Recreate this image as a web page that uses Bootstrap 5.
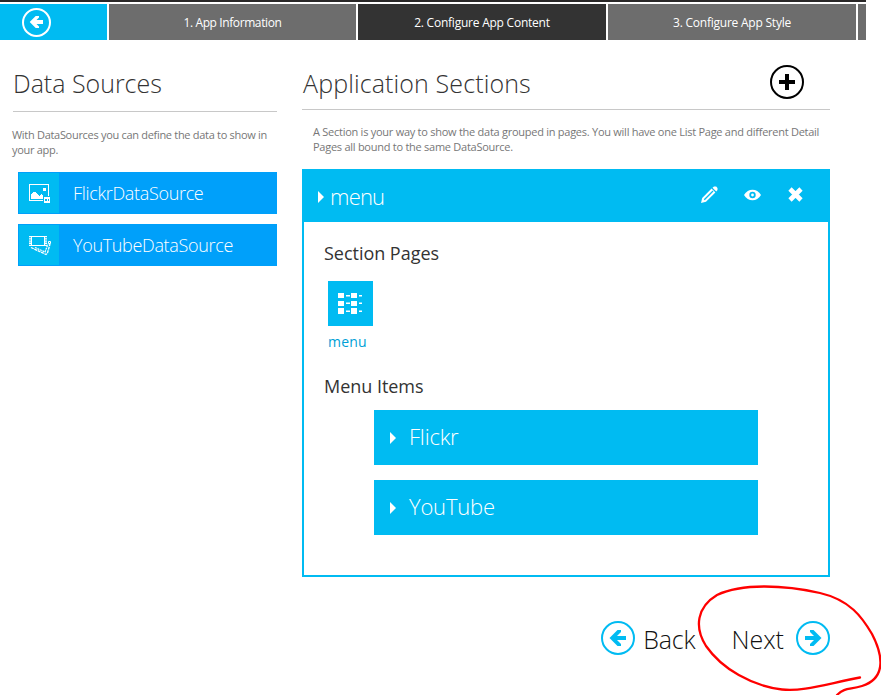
<!DOCTYPE html>
<html lang="en">
<head>
<meta charset="utf-8">
<meta name="viewport" content="width=device-width, initial-scale=1">
<title>Configure App Content</title>
<link href="https://cdn.jsdelivr.net/npm/bootstrap@5.3.0/dist/css/bootstrap.min.css" rel="stylesheet">
<style>
  :root { --sky: #00bbf2; --azure: #00a0fa; }
  body { font-family: "Open Sans", "Noto Sans", sans-serif; color: #333; background: #fff; height: 695px; overflow: hidden; }
  svg { display: block; flex: none; }
  .shell { width: 866px; }
  .topline { height: 2px; background: #2a2828; margin-bottom: 2px; }
  .steps { height: 36px; gap: 2px; }
  .step { width: 248px; padding-top: 2px; background: #6d6d6d; color: #fff; font-size: 12px; letter-spacing: -.23px; }
  .step-first { width: 247px; letter-spacing: -.4px; }
  .step.active { background: #333; }
  .step-back { width: 107px; background: var(--sky); padding-left: 22px; }
  .step-rest { width: 8px; }
  .columns { padding: 0 36px 0 13px; gap: 25px; }
  .sources { width: 264px; }
  .sections { width: 528px; }
  .heading { font-size: 25px; font-weight: 300; line-height: 34px; letter-spacing: .12px; border-bottom: 1px solid #c8c8c8; }
  .sources .heading { height: 72px; padding-top: 26px; letter-spacing: -.02px; }
  .sections .heading { height: 70px; padding: 26px 0 0 1px; }
  .add { margin: -1px 26px 0 0; }
  .note { font-size: 11px; line-height: 15px; color: #777; white-space: nowrap; letter-spacing: -.26px; }
  .sources .note { margin: 15px 0 0 -1px; letter-spacing: -.3px; }
  .sections .note { margin: 14px 0 0 11px; }
  .source { width: 259px; height: 42px; background: var(--azure); border: 1px solid var(--azure); color: #fff; font-size: 18px; font-weight: 300; letter-spacing: -.33px; margin: 15px 0 0 5px; }
  .source + .source { margin-top: 10px; }
  .source-icon { width: 40px; height: 40px; padding: 2px 0 0 2px; background: var(--sky); margin-right: 14px; }
  .panel { height: 408px; border: 2px solid var(--sky); margin-top: 15px; }
  .panel-head { height: 51px; background: var(--sky); color: #fff; font-size: 22px; font-weight: 300; letter-spacing: -.8px; padding: 0 24px 0 14px; }
  .head-name { margin-left: 6px; }
  .tools { gap: 26px; margin-top: -4px; }
  .caret { width: 0; height: 0; border: solid transparent; border-width: 6px 0 6px 6px; border-left-color: #fff; }
  .sub { font-size: 18px; line-height: 24px; letter-spacing: -.03px; margin: 19px 0 0 20px; }
  .sub-items { margin-top: 22px; }
  .page-tile { margin: 16px 0 0 24px; }
  .tile { width: 45px; height: 45px; background: var(--sky); }
  .tile-name { font-size: 14px; line-height: 20px; letter-spacing: .2px; color: #009fd6; margin-top: 6px; }
  .items { gap: 15px; margin: 12px 0 0 70px; }
  .item { width: 384px; height: 55px; background: var(--sky); color: #fff; font-size: 22px; font-weight: 300; letter-spacing: -.2px; padding-left: 16px; }
  .item span { margin: -2px 0 0 13px; }
  .pager { font-size: 25px; font-weight: 300; color: #111; margin-top: 44px; height: 34px; }
  .pager span { padding-top: 4px; }
  .back-text { margin-left: 8px; letter-spacing: -.2px; }
  .next-text { margin: 0 12px 0 36px; }
  .scribble { position: absolute; left: 690px; top: 575px; }
</style>
<script src="https://cdn.jsdelivr.net/npm/bootstrap@5.3.0/dist/js/bootstrap.bundle.min.js" defer></script>
</head>
<body class="position-relative">
<div class="shell">
  <div class="topline"></div>
  <nav class="steps d-flex">
    <a class="step-back d-flex align-items-center" href="#" aria-label="Back">
      <svg width="29" height="29" viewBox="0 0 29 29"><circle cx="14.5" cy="14.5" r="13.5" fill="none" stroke="#fff" stroke-width="2"/><path d="M7.700 14 13.700 8H17v1.500L14.500 12H21v4h-6.500l2.500 2.500V20h-3.300z" fill="#fff"/></svg>
    </a>
    <div class="step step-first d-flex align-items-center justify-content-center"><span>1. App Information</span></div>
    <div class="step active d-flex align-items-center justify-content-center"><span>2. Configure App Content</span></div>
    <div class="step d-flex align-items-center justify-content-center"><span>3. Configure App Style</span></div>
    <div class="step step-rest"></div>
  </nav>

  <main class="columns d-flex">
    <aside class="sources">
      <h1 class="heading mb-0">Data Sources</h1>
      <p class="note mb-0">With DataSources you can define the data to show in<br>your app.</p>
      <div class="source d-flex align-items-center">
        <span class="source-icon d-flex align-items-center justify-content-center">
          <svg width="22" height="20" viewBox="0 0 22 20" shape-rendering="crispEdges"><path d="M.5 17V.5h19V12M0 16.500h14" fill="none" stroke="#fff"/><path d="M2 15v-4l2-3h2l4 4 2-2 2 2v3zM14 4h3v3h-3zM15 13h6v6h-6z" fill="#fff"/><path d="M16 15h2v2h-2zM19 15h1v2h-1z" fill="#00bbf2"/></svg>
        </span>FlickrDataSource
      </div>
      <div class="source d-flex align-items-center">
        <span class="source-icon d-flex align-items-center justify-content-center">
          <svg width="22" height="20" viewBox="0 0 22 20" fill="none" stroke="#fff"><path d="M2.500.5h13v9h-13zM.5.500h17M.5 9.500h17"/><path d="M1 0v10M17 0v10" stroke-width="2" stroke-dasharray="1.300 .9"/><path d="M2 11.500l15 7 1.500-1.500 2.500-9" stroke-dasharray="3 .7" stroke-width="1.300"/><path d="M6 11.500l10 4.500 3-8" stroke-dasharray="2 .7" stroke-width="1.200"/><path d="M19.500 5.500h2v2h-2z"/></svg>
        </span>YouTubeDataSource
      </div>
    </aside>

    <section class="sections">
      <div class="heading d-flex justify-content-between">
        <span>Application Sections</span>
        <svg class="add" width="34" height="34" viewBox="0 0 34 34"><circle cx="17" cy="17" r="16" fill="none" stroke="#000" stroke-width="2"/><path d="M9 15h6V9h4v6h6v4h-6v6h-4v-6H9z" fill="#000"/></svg>
      </div>
      <p class="note mb-0">A Section is your way to show the data grouped in pages. You will have one List Page and different Detail<br>Pages all bound to the same DataSource.</p>
      <div class="panel">
        <div class="panel-head d-flex align-items-center">
          <i class="caret"></i><span class="head-name">menu</span>
          <span class="tools d-flex align-items-center ms-auto">
            <svg width="18" height="18" viewBox="0 0 18 18"><path d="M1 17l1.200-5L11.600 2.600l3.800 3.800L6 15.800z" fill="#fff"/><path d="M12.500 1.700 14 .5h2.200L17.500 2v2l-1.200 1.400z" fill="#fff"/><path d="M4.300 13.700l8.700-8.700" stroke="#00bbf2" stroke-width="1.300"/></svg>
            <svg width="17" height="12" viewBox="0 0 17 12"><path d="M0 6C4-1 13-1 17 6 13 13 4 13 0 6z" fill="#fff"/><circle cx="8.500" cy="6" r="3.200" fill="#00bbf2"/><circle cx="8.500" cy="6" r="1.400" fill="#fff"/></svg>
            <svg width="17" height="17" viewBox="0 0 17 17"><path d="M3 3l11 11M14 3 3 14" stroke="#fff" stroke-width="4.600"/></svg>
          </span>
        </div>
        <h2 class="sub mb-0">Section Pages</h2>
        <div class="page-tile">
          <div class="tile d-flex align-items-center justify-content-center">
            <svg width="25" height="23" viewBox="0 0 25 23" fill="#fff"><path d="M0 1h6v5H0zM0 9h6v5H0zM0 16h6v6H0zM13 1h6v5h-6zM13 9h6v5h-6zM13 16h6v6h-6zM8 3h4v1.500H8zM8 10.500h4V12H8zM8 18.500h4V20H8zM21 3h3v1.500h-3zM21 10.500h3V12h-3zM21 18.500h3V20h-3z"/></svg>
          </div>
          <div class="tile-name">menu</div>
        </div>
        <h2 class="sub sub-items mb-0">Menu Items</h2>
        <div class="items d-flex flex-column">
          <div class="item d-flex align-items-center"><i class="caret"></i><span>Flickr</span></div>
          <div class="item d-flex align-items-center"><i class="caret"></i><span>YouTube</span></div>
        </div>
      </div>
      <div class="pager d-flex align-items-center justify-content-end">
        <svg width="34" height="34" viewBox="0 0 34 34"><circle cx="17" cy="17" r="16" fill="none" stroke="#00bbf2" stroke-width="2"/><path d="M8.500 17 16.500 9H20v2l-4 4h9v4h-9l4 4v2h-3.500z" fill="#00bbf2"/></svg>
        <span class="back-text">Back</span>
        <span class="next-text">Next</span>
        <svg width="34" height="34" viewBox="0 0 34 34"><circle cx="17" cy="17" r="16" fill="none" stroke="#00bbf2" stroke-width="2"/><path d="M25.500 17 17.500 9H14v2l4 4H9v4h9l-4 4v2h3.500z" fill="#00bbf2"/></svg>
      </div>
    </section>
  </main>
</div>
<svg class="scribble" width="191" height="120" viewBox="690 575 191 120" fill="none" stroke="#f00" stroke-width="2.300" stroke-linecap="round"><path d="M860 677.500C826 684 802 692 782 689.500C752 686 722 669 706 646C694 627 697 607 717 595C742 583 785 585 820 593C850 600 862 617 872 634C885 659 884 679 862 686C850 690 845 687 837 695"/></svg>
</body>
</html>
